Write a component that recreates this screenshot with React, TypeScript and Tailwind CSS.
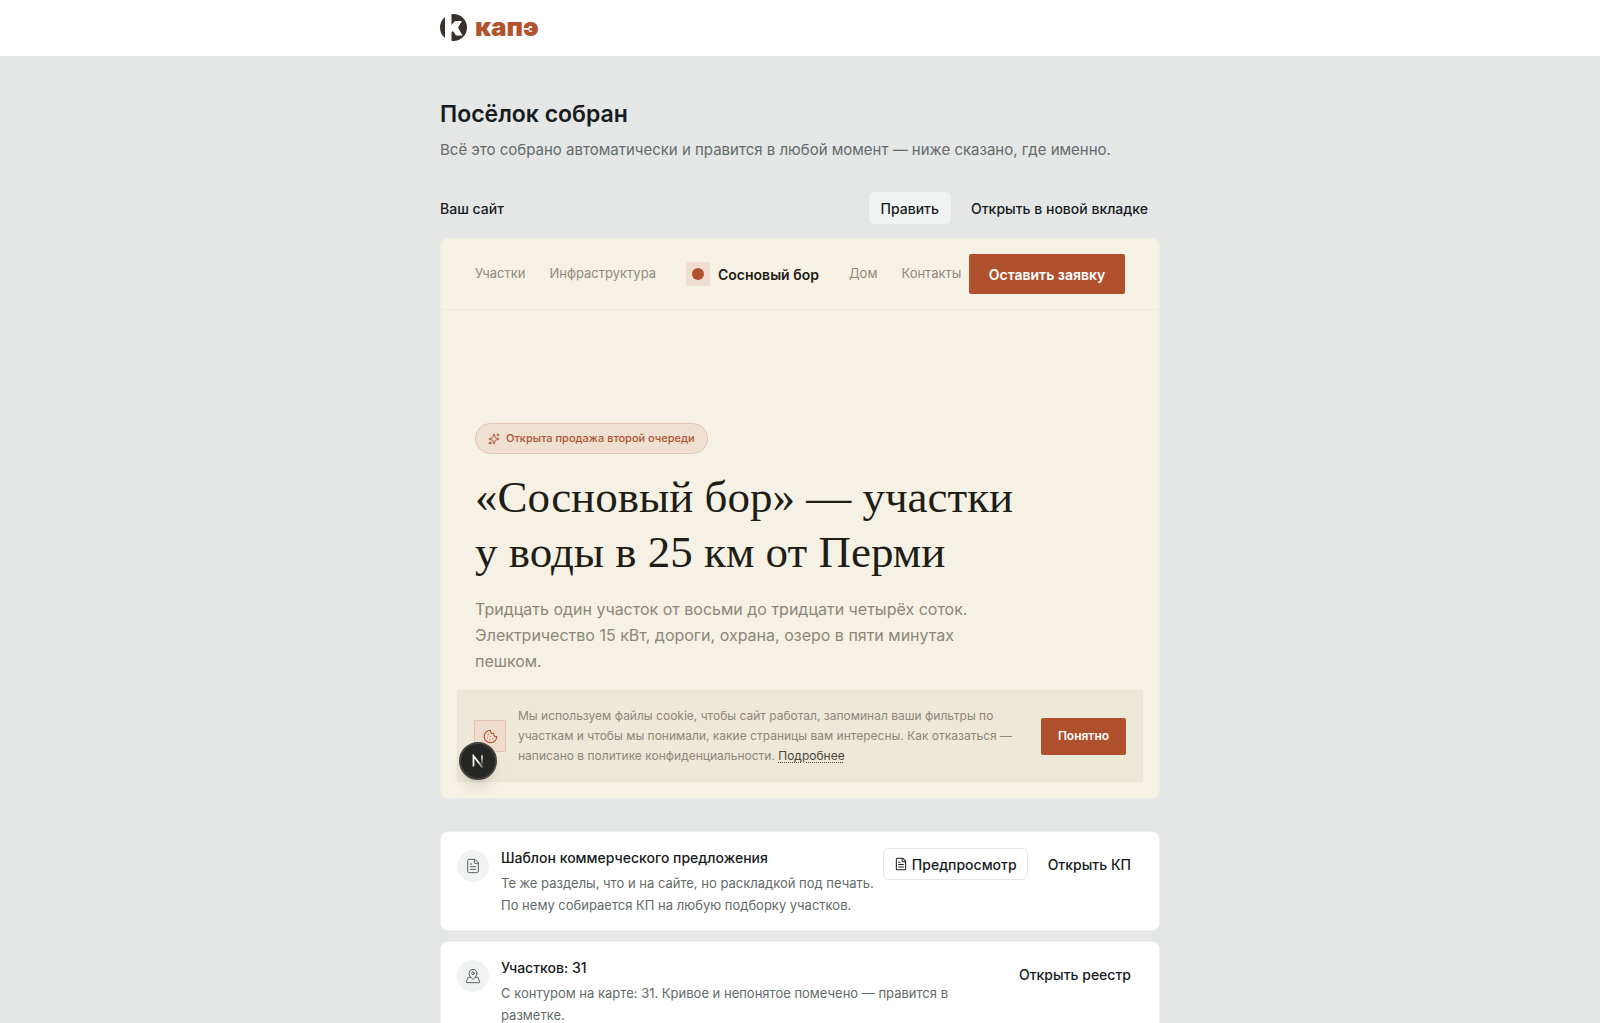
import type { ReactNode } from 'react';
import { Cookie, FileText, MapPinned, Sparkles } from 'lucide-react';

function Logo() {
  return (
    <a href="#" className="flex items-center gap-2">
      <svg width="27" height="27" viewBox="0 0 27 27" aria-hidden="true">
        <circle cx="13.5" cy="13.5" r="13.5" fill="#38302b" />
        <path d="M5 0h6.5v27H5z" fill="#fff" />
        <path d="M11 11.5l4-4.5h7l-4 6.5 4.5 8h-6.5L13 17l-2 1.5z" fill="#fff" />
      </svg>
      <span className="text-[26px] leading-8 font-black text-[#b1532d]">капэ</span>
    </a>
  );
}

function NavLink({ children }: { children: ReactNode }) {
  return (
    <a href="#" className="text-[13px] text-[#918b7c]">
      {children}
    </a>
  );
}

function SitePreview() {
  return (
    <div className="relative overflow-hidden rounded-lg border border-[#eceee6] bg-[#f5f1e4]">
      <div className="flex h-[71px] items-center border-b border-[#edeadd] px-[34px]">
        <nav className="flex items-center gap-6">
          <NavLink>Участки</NavLink>
          <NavLink>Инфраструктура</NavLink>
        </nav>
        <div className="mx-[30px] flex items-center gap-2">
          <span className="flex size-6 items-center justify-center rounded-xs bg-[#f0dfd0]">
            <span className="size-3 rounded-full bg-[#b1502d]" />
          </span>
          <span className="text-[14px] font-semibold whitespace-nowrap text-[#1f1d16]">Сосновый бор</span>
        </div>
        <nav className="flex items-center gap-6">
          <NavLink>Дом</NavLink>
          <NavLink>Контакты</NavLink>
        </nav>
        <button className="ml-auto h-10 w-[156px] rounded-xs bg-[#af512d] text-[14px] font-semibold whitespace-nowrap text-white">
          Оставить заявку
        </button>
      </div>

      <div className="px-[34px] pt-[113px]">
        <span className="inline-flex h-[31px] items-center gap-1.5 rounded-full border border-[#e3c3b1] bg-[#efe0d2] px-3 text-[11px] font-medium text-[#ad5535]">
          <Sparkles size={12} strokeWidth={2} />
          Открыта продажа второй очереди
        </span>
        <h2 className="mt-4 font-['Liberation_Serif',serif] text-[45px] leading-[55px] text-[#1f1d16]">
          «Сосновый бор» — участки
          <br />у воды в 25 км от Перми
        </h2>
        <p className="mt-4 max-w-[512px] text-[16px] leading-[26px] text-[#8d8778]">
          Тридцать один участок от восьми до тридцати четырёх соток. Электричество 15 кВт, дороги, охрана, озеро в
          пяти минутах пешком.
        </p>
      </div>

      <div className="m-4 flex items-center gap-3 rounded-xs border border-[#e8e2d2] bg-[#eee8d8] px-4 py-[15px]">
        <span className="flex size-8 shrink-0 items-center justify-center border border-[#e6c4b3] bg-[#efdccc] text-[#b1502d]">
          <Cookie size={15} strokeWidth={1.75} />
        </span>
        <p className="max-w-[504px] text-[12px] leading-5 text-[#8d8778]">
          Мы используем файлы cookie, чтобы сайт работал, запоминал ваши фильтры по участкам и чтобы мы понимали, какие
          страницы вам интересны. Как отказаться — написано в политике конфиденциальности.{' '}
          <a href="#" className="text-[#4a463a] underline decoration-dotted underline-offset-2">
            Подробнее
          </a>
        </p>
        <button className="ml-auto h-[37px] w-[85px] shrink-0 rounded-xs bg-[#af512d] text-[12px] font-semibold text-white">
          Понятно
        </button>
      </div>

      {/* dev tools badge floats over the page corner */}
      <button
        aria-label="Next.js"
        className="absolute bottom-[18px] left-[18px] flex size-[38px] items-center justify-center rounded-full border-2 border-[#45433f] bg-[#262624] shadow-lg"
      >
        <svg width="14" height="14" viewBox="0 0 14 14" fill="none" aria-hidden="true">
          <defs>
            <linearGradient id="diag" x1="7" y1="7" x2="12" y2="14" gradientUnits="userSpaceOnUse">
              <stop stopColor="#fff" />
              <stop offset="1" stopColor="#fff" stopOpacity="0.3" />
            </linearGradient>
            <linearGradient id="stem" x1="11" y1="1" x2="11" y2="12" gradientUnits="userSpaceOnUse">
              <stop stopColor="#fff" />
              <stop offset="1" stopColor="#fff" stopOpacity="0" />
            </linearGradient>
          </defs>
          <path d="M2.5 12.5V2L11.5 13.5" stroke="url(#diag)" strokeWidth="1.75" />
          <path d="M11 1.5V10" stroke="url(#stem)" strokeWidth="1.75" />
        </svg>
      </button>
    </div>
  );
}

type ResultCardProps = {
  icon: ReactNode;
  title: string;
  text: string;
  children: ReactNode;
};

function ResultCard({ icon, title, text, children }: ResultCardProps) {
  return (
    <li className="flex items-start rounded-lg border border-[#eef0ef] bg-white px-4 pt-4 pb-3.5">
      <span className="mt-0.5 mr-3 flex size-8 shrink-0 items-center justify-center rounded-full bg-[#f1f3f2] text-[#596261]">
        {icon}
      </span>
      <div className="mr-1 min-w-0 flex-1">
        <h3 className="text-[14px] leading-5 font-medium">{title}</h3>
        <p className="mt-1 max-w-[450px] text-[13px] leading-[22px] text-[#636b6a]">{text}</p>
      </div>
      <div className="flex shrink-0 items-center gap-2">{children}</div>
    </li>
  );
}

export default function App() {
  return (
    <div className="min-h-screen bg-[#e4e7e6] font-['Inter',sans-serif] text-[#171c1e]">
      <header className="bg-white">
        <div className="mx-auto flex h-14 max-w-[720px] items-center pb-0.5">
          <Logo />
        </div>
      </header>

      <main className="mx-auto max-w-[720px] pt-10 pb-10">
        <h1 className="text-[23px] leading-9 font-semibold">Посёлок собран</h1>
        <p className="mt-1.5 text-[15px] leading-6 text-[#636b6a]">
          Всё это собрано автоматически и правится в любой момент — ниже сказано, где именно.
        </p>

        <section className="mt-[30px]">
          <div className="mb-3.5 flex items-center gap-2 text-[14px] font-medium">
            <h2 className="mr-auto">Ваш сайт</h2>
            <button className="h-8 rounded-md bg-[#f0f3f2] px-3">Править</button>
            <a href="#" className="flex h-8 items-center px-3">
              Открыть в новой вкладке
            </a>
          </div>
          <SitePreview />
        </section>

        <ul className="mt-8 flex flex-col gap-2.5">
          <ResultCard
            icon={<FileText size={16} strokeWidth={1.5} />}
            title="Шаблон коммерческого предложения"
            text="Те же разделы, что и на сайте, но раскладкой под печать. По нему собирается КП на любую подборку участков."
          >
            <button className="flex h-8 items-center gap-1 rounded-md border border-[#e4e7e6] px-2.5 text-[14px] font-medium">
              <FileText size={14} strokeWidth={1.75} />
              Предпросмотр
            </button>
            <a href="#" className="flex h-8 items-center px-3 text-[14px] font-medium">
              Открыть КП
            </a>
          </ResultCard>
          <ResultCard
            icon={<MapPinned size={16} strokeWidth={1.5} />}
            title="Участков: 31"
            text="С контуром на карте: 31. Кривое и непонятое помечено — правится в разметке."
          >
            <a href="#" className="flex h-8 items-center px-3 text-[14px] font-medium">
              Открыть реестр
            </a>
          </ResultCard>
        </ul>
      </main>
    </div>
  );
}
